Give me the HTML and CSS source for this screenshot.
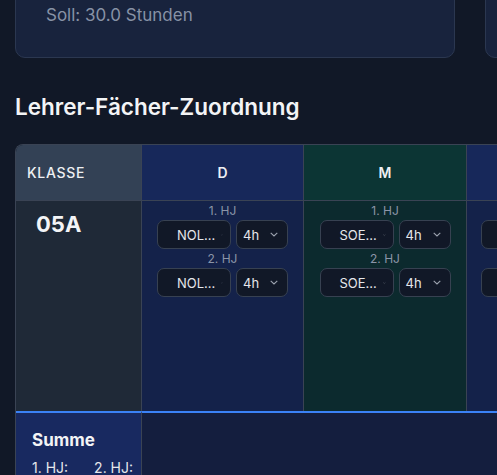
FILE: index.html
```html
<!DOCTYPE html>
<html lang="de">
<head>
<meta charset="utf-8">
<title>Lehrer-Fächer-Zuordnung</title>
<link rel="stylesheet" href="styles.css">
</head>
<body>
<div class="page">
  <div class="cards">
    <div class="card"><p class="soll">Soll: 30.0 Stunden</p></div>
    <div class="card"></div>
  </div>

  <h2 class="section-title">Lehrer-Fächer-Zuordnung</h2>

  <div class="table-wrap">
    <div class="grid">
      <div class="th th-klasse">KLASSE</div>
      <div class="th subj-blue">D</div>
      <div class="th subj-green">M</div>
      <div class="th subj-blue"></div>
      <div class="th subj-green"></div>

      <div class="td td-klasse">05A</div>
      <div class="td body-blue">
        <div class="hj">1. HJ</div>
        <div class="sel-row">
          <div class="sel sel-teacher"><span>NOL...</span><svg class="chev-sm" viewBox="0 0 6 4"><path d="M0.5 0.8 3 3.2 5.5 0.8"/></svg></div>
          <div class="sel sel-hours"><span>4h</span><svg class="chev" viewBox="0 0 8 5"><path d="M0.7 0.8 4 4 7.3 0.8"/></svg></div>
        </div>
        <div class="hj">2. HJ</div>
        <div class="sel-row">
          <div class="sel sel-teacher"><span>NOL...</span><svg class="chev-sm" viewBox="0 0 6 4"><path d="M0.5 0.8 3 3.2 5.5 0.8"/></svg></div>
          <div class="sel sel-hours"><span>4h</span><svg class="chev" viewBox="0 0 8 5"><path d="M0.7 0.8 4 4 7.3 0.8"/></svg></div>
        </div>
      </div>
      <div class="td body-green">
        <div class="hj">1. HJ</div>
        <div class="sel-row">
          <div class="sel sel-teacher"><span>SOE...</span><svg class="chev-sm" viewBox="0 0 6 4"><path d="M0.5 0.8 3 3.2 5.5 0.8"/></svg></div>
          <div class="sel sel-hours"><span>4h</span><svg class="chev" viewBox="0 0 8 5"><path d="M0.7 0.8 4 4 7.3 0.8"/></svg></div>
        </div>
        <div class="hj">2. HJ</div>
        <div class="sel-row">
          <div class="sel sel-teacher"><span>SOE...</span><svg class="chev-sm" viewBox="0 0 6 4"><path d="M0.5 0.8 3 3.2 5.5 0.8"/></svg></div>
          <div class="sel sel-hours"><span>4h</span><svg class="chev" viewBox="0 0 8 5"><path d="M0.7 0.8 4 4 7.3 0.8"/></svg></div>
        </div>
      </div>
      <div class="td body-blue body-clip">
        <div class="hj">&nbsp;</div>
        <div class="sel-row">
          <div class="sel sel-teacher"></div>
          <div class="sel sel-hours"></div>
        </div>
        <div class="hj">&nbsp;</div>
        <div class="sel-row">
          <div class="sel sel-teacher"></div>
          <div class="sel sel-hours"></div>
        </div>
      </div>
      <div class="td body-green"></div>

      <div class="tf tf-klasse">
        <div class="summe">Summe</div>
        <div class="summe-hj"><span>1. HJ:</span><span>2. HJ:</span></div>
      </div>
      <div class="tf tf-rest"></div>
    </div>
  </div>
</div>
</body>
</html>
```

FILE: styles.css
```css
html, body {
  margin: 0;
  padding: 0;
}

body {
  background: #111827;
  font-family: Inter, "Noto Sans", sans-serif;
  color: #e5e7eb;
  overflow: hidden;
}

.page {
  width: 910px;
  padding: 0 15px;
}

.cards {
  display: grid;
  grid-template-columns: 440px 440px;
  gap: 30px;
  margin-top: -43px;
}

.card {
  background: #18233d;
  border: 1px solid #2b3750;
  border-radius: 10px;
  padding: 45px 30px 30px;
  min-height: 24px;
}

.soll {
  margin: 0;
  font-size: 17px;
  line-height: 24px;
  color: #8792a6;
}

.section-title {
  margin: 35px 0 23px;
  font-size: 22.5px;
  line-height: 28px;
  font-weight: 600;
  color: #f3f4f6;
}

.table-wrap {
  border: 1px solid #3a4354;
  border-right: none;
  border-bottom: none;
  border-radius: 8px 0 0 0;
  overflow: hidden;
}

.grid {
  display: grid;
  grid-template-columns: 126px 162px 163px 163px 163px;
  grid-template-rows: 56px 210px 80px;
}

.th {
  display: flex;
  align-items: center;
  justify-content: center;
  font-size: 14px;
  font-weight: 600;
  color: #eef0f3;
  border-right: 1px solid #3a4354;
  border-bottom: 1px solid #3a4354;
}

.th-klasse {
  justify-content: flex-start;
  padding-left: 11px;
  background: #334155;
  font-weight: 500;
  letter-spacing: 0.05em;
}

.subj-blue { background: #17285a; }
.subj-green { background: #0c3534; }

.td {
  border-right: 1px solid #3a4354;
  display: flex;
  flex-direction: column;
  align-items: center;
}

.td-klasse {
  align-items: flex-start;
  background: #1f2937;
  padding: 7px 0 0 20px;
  font-size: 22px;
  line-height: 32px;
  font-weight: 700;
  color: #f3f4f6;
}

.body-blue { background: #14224a; }
.body-green { background: #0c2a2e; }

.body-clip {
  align-items: flex-start;
  padding-left: 14px;
}

.hj {
  font-size: 12px;
  line-height: 19px;
  color: #8b95a8;
}

.sel-row {
  display: flex;
  gap: 5px;
}

.sel {
  box-sizing: border-box;
  height: 29px;
  display: flex;
  align-items: center;
  background: #111827;
  border: 1px solid #374151;
  border-radius: 7px;
  font-size: 13px;
  color: #e5e7eb;
}

.sel-teacher {
  width: 74px;
  padding: 0 7px 0 19px;
}

.sel-teacher .chev-sm {
  margin-left: 6px;
}

.sel-hours {
  width: 52px;
  padding: 0 9px 0 6px;
}

.sel-hours .chev {
  margin-left: auto;
}

.chev-sm {
  width: 6px;
  height: 4px;
  fill: none;
  stroke: #6b7280;
  stroke-width: 1;
}

.chev {
  width: 8px;
  height: 5px;
  fill: none;
  stroke: #9ca3af;
  stroke-width: 1.1;
}

.tf {
  border-top: 2px solid #3b82f6;
}

.tf-klasse {
  background: #182960;
  border-right: 1px solid #3a4354;
  padding: 15px 0 0 16px;
}

.tf-rest {
  grid-column: 2 / -1;
  background: #141e3e;
}

.summe {
  font-size: 17px;
  line-height: 24px;
  font-weight: 700;
  color: #f3f4f6;
}

.summe-hj {
  margin-top: 6px;
  display: flex;
  gap: 26px;
  font-size: 14px;
  line-height: 20px;
  color: #e5e7eb;
}
```
